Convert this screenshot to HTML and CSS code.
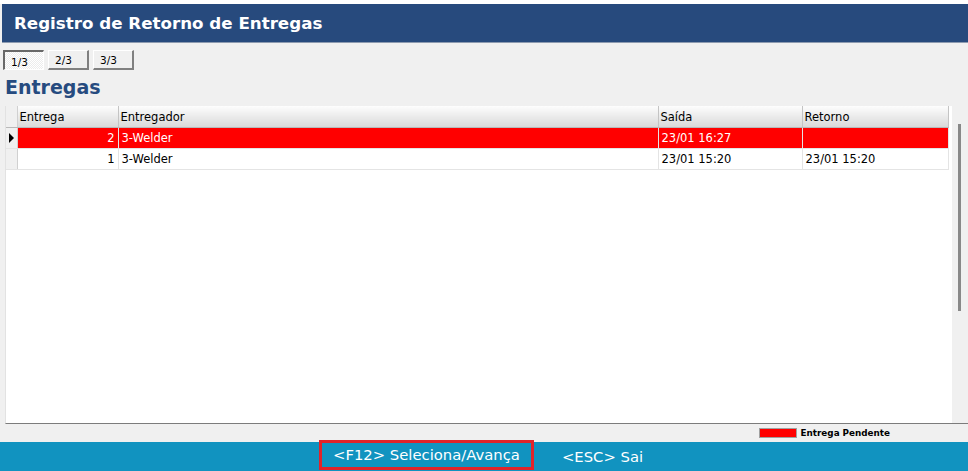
FILE: index.html
```html
<!DOCTYPE html>
<html lang="pt">
<head>
<meta charset="utf-8">
<title>Registro de Retorno de Entregas</title>
<link rel="stylesheet" href="styles.css">
</head>
<body>
<div class="app">
  <header class="titlebar">Registro de Retorno de Entregas</header>
  <div class="tabs">
    <button class="tab tab-active">1/3</button>
    <button class="tab">2/3</button>
    <button class="tab">3/3</button>
  </div>
  <h2 class="heading">Entregas</h2>
  <div class="grid">
    <div class="grid-body">
      <table class="table">
        <colgroup>
          <col class="c-ind"><col class="c-ent"><col class="c-entr"><col class="c-sai"><col class="c-ret">
        </colgroup>
        <thead>
          <tr><th class="ind"></th><th>Entrega</th><th>Entregador</th><th>Saída</th><th>Retorno</th></tr>
        </thead>
        <tbody>
          <tr class="pending"><td class="ind"><span class="arrow"></span></td><td class="num">2</td><td>3-Welder</td><td>23/01 16:27</td><td></td></tr>
          <tr><td class="ind"></td><td class="num">1</td><td>3-Welder</td><td>23/01 15:20</td><td>23/01 15:20</td></tr>
        </tbody>
      </table>
    </div>
    <div class="scrollbar"><div class="thumb"></div></div>
  </div>
  <div class="legend">
    <span class="swatch"></span>
    <span class="legend-text">Entrega Pendente</span>
  </div>
  <footer class="footer">
    <span class="key key-focus">&lt;F12&gt; Seleciona/Avança</span>
    <span class="key">&lt;ESC&gt; Sai</span>
  </footer>
</div>
</body>
</html>
```
FILE: styles.css
```css
html, body {
  margin: 0;
  padding: 0;
  background: #ffffff;
}
.app {
  width: 968px;
  height: 471px;
  padding-top: 4px;
  box-sizing: border-box;
  background: linear-gradient(#ffffff 0 4px, #f0f0f0 4px);
  display: flex;
  flex-direction: column;
  font-family: "DejaVu Sans", Verdana, sans-serif;
  overflow: hidden;
}
.titlebar {
  margin-left: 2px;
  height: 38px;
  border-bottom: 1px solid #8d9bb0;
  background: #274a7d;
  color: #ffffff;
  font-weight: bold;
  font-size: 16.7px;
  line-height: 38px;
  padding-left: 12px;
}
.tabs {
  display: flex;
  gap: 4px;
  margin: 7px 0 0 3px;
}
.tab {
  width: 41px;
  height: 20px;
  box-sizing: border-box;
  padding: 0 0 0 6px;
  text-align: left;
  font-family: "DejaVu Sans", Verdana, sans-serif;
  font-size: 10.5px;
  color: #000000;
  background: #f0f0f0;
  border-style: solid;
  border-width: 1px 2px 2px 1px;
  border-color: #ffffff #808080 #808080 #ffffff;
}
.tab-active {
  background: repeating-conic-gradient(#ffffff 0 25%, #ececec 0 50%) 0 0 / 2px 2px;
  border-color: #696969 #ffffff #ffffff #696969;
  border-width: 2px 1px 1px 2px;
  padding-top: 2px;
}
.heading {
  margin: 5px 0 0 5px;
  font-size: 19px;
  line-height: 24px;
  font-weight: bold;
  color: #264b7f;
}
.grid {
  margin: 7px 0 0 5px;
  height: 318px;
  box-sizing: border-box;
  border-bottom: 1px solid #7c7c7c;
  border-left: 1px solid #e2e2e2;
  display: flex;
  background: #ffffff;
}
.grid-body {
  flex: 1;
}
.table {
  border-collapse: collapse;
  table-layout: fixed;
  width: 942px;
  font-size: 11.5px;
  color: #000000;
}
.c-ind { width: 11px; }
.c-ent { width: 101px; }
.c-entr { width: 540px; }
.c-sai { width: 144px; }
.c-ret { width: 146px; }
.table th {
  height: 21px;
  padding: 0 0 0 2px;
  text-align: left;
  font-weight: normal;
  background: linear-gradient(#fdfdfd, #d9d9d9);
  border-right: 1px solid #c4c4c4;
  border-bottom: 1px solid #b9b9b9;
  white-space: nowrap;
}
.table td {
  height: 20px;
  padding: 0 0 0 3px;
  border-right: 1px solid #e4e4e4;
  border-bottom: 1px solid #e4e4e4;
  white-space: nowrap;
}
.table .ind {
  padding: 0;
  background: #f0f0f0;
  border-right: 1px solid #d0d0d0;
}
.table th.ind {
  background: #f0f0f0;
}
.table td.num {
  text-align: right;
  padding: 0 3px 0 0;
}
.pending td {
  background: #ff0000;
  color: #ffffff;
}
.pending td.ind {
  background: #f0f0f0;
}
.arrow {
  display: block;
  width: 0;
  height: 0;
  margin-left: 3px;
  border-top: 5px solid transparent;
  border-bottom: 5px solid transparent;
  border-left: 5px solid #000000;
}
.scrollbar {
  width: 16px;
  background: #f0f0f0;
}
.thumb {
  width: 3px;
  height: 187px;
  margin: 18px 0 0 6px;
  background: #888888;
}
.legend {
  height: 18px;
  display: flex;
  align-items: center;
  justify-content: flex-end;
  padding-right: 78px;
}
.swatch {
  width: 36px;
  height: 8px;
  background: #ff0000;
  border: 1px solid #a0a0a0;
  margin-right: 4px;
}
.legend-text {
  font-size: 8.8px;
  font-weight: bold;
  color: #000000;
}
.footer {
  flex: 1;
  background: #1193c0;
  display: flex;
  align-items: flex-start;
  padding-left: 319px;
  gap: 28px;
  color: #ffffff;
  font-size: 14.8px;
}
.key {
  line-height: 29px;
}
.key-focus {
  margin-top: -2px;
  height: 30px;
  box-sizing: border-box;
  border: 3px solid #e2232a;
  padding: 0 11px;
  line-height: 24px;
}
```
